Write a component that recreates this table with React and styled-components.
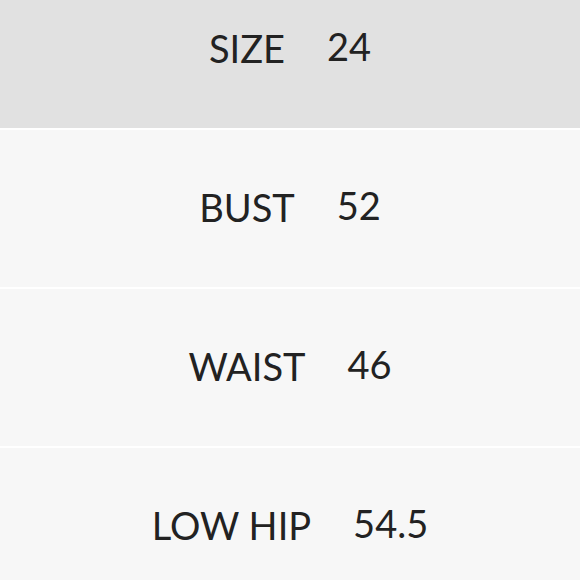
import React from "react";
import styled, { createGlobalStyle } from "styled-components";

const GlobalStyle = createGlobalStyle`
  html, body {
    margin: 0;
    padding: 0;
    background: #ffffff;
    overflow: hidden;
  }
`;

const Table = styled.div`
  display: flex;
  flex-direction: column;
  width: 580px;
  height: 580px;
  overflow: hidden;
  background: #ffffff;
`;

const Inner = styled.div`
  display: flex;
  flex-direction: column;
  gap: 2px;
  margin-top: -29px;
`;

const Row = styled.div`
  display: flex;
  justify-content: center;
  align-items: center;
  gap: 42px;
  height: 157px;
  flex-shrink: 0;
  padding-bottom: 3px;
  box-sizing: border-box;
  background: ${(p) => (p.$header ? "#e1e1e1" : "#f7f7f7")};
  font-family: Lato, "Open Sans", sans-serif;
  font-size: 38px;
  color: #222222;
`;

const Label = styled.span`
  text-transform: uppercase;
`;

const Value = styled.span`
  padding-bottom: 4px;
`;

const rows = [
  { label: "Size", value: "24", header: true },
  { label: "Bust", value: "52" },
  { label: "Waist", value: "46" },
  { label: "Low hip", value: "54.5" },
];

const App = () => {
  return (
    <Table>
      <GlobalStyle />
      <Inner>
        {rows.map((r) => (
          <Row key={r.label} $header={r.header}>
            <Label>{r.label}</Label>
            <Value>{r.value}</Value>
          </Row>
        ))}
      </Inner>
    </Table>
  );
};

export default App;
